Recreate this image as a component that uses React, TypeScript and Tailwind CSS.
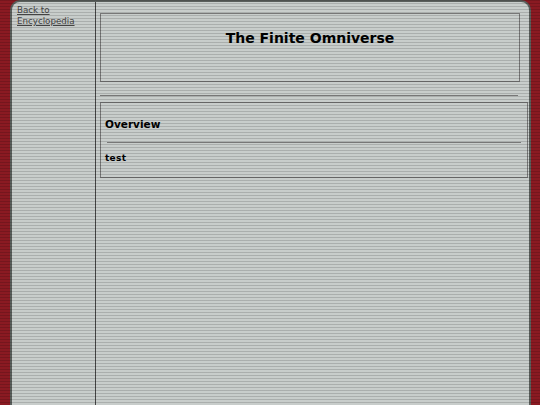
export default function App() {
  return (
    <div className="relative h-[405px] w-[540px] overflow-hidden bg-[#8a1a22] [font-family:'DejaVu_Sans',sans-serif]">
      <div className="ml-[10px] mr-[9px] flex h-[420px] overflow-hidden rounded-t-[10px] border-x-2 border-t-2 border-[#5a5f5c] bg-[#c8cdcb] text-black">
        <div className="w-[84px] shrink-0 border-r border-[#444] pl-[5px] pt-[3px]">
          <a className="block text-[8.7px] leading-[11px] text-[#444] underline">
            Back to
            <br />
            Encyclopedia
          </a>
        </div>
        <div className="flex-1 pl-[4px] pt-[11px]">
          <div className="mr-[9px] flex h-[69px] justify-center border border-[#777] pt-[14px]">
            <h1 className="text-[14px] font-bold leading-[20px]">The Finite Omniverse</h1>
          </div>
          <div className="mr-[11px] mt-[13px] border-t border-[#777]" />
          <div className="mr-[1px] mt-[6px] h-[76px] border border-[#777] px-[4px] pt-[13px]">
            <h2 className="text-[10.5px] font-bold leading-[16px]">Overview</h2>
            <div className="mx-[2px] mt-[10px] border-t border-[#777]" />
            <p className="mt-[9px] text-[9px] font-bold leading-[12px] tracking-[0.3px]">test</p>
          </div>
        </div>
      </div>
      <div className="pointer-events-none absolute inset-0 bg-[repeating-linear-gradient(to_bottom,rgba(0,0,0,0.15)_0px,rgba(0,0,0,0.15)_1px,transparent_1px,transparent_3px)]" />
    </div>
  );
}
